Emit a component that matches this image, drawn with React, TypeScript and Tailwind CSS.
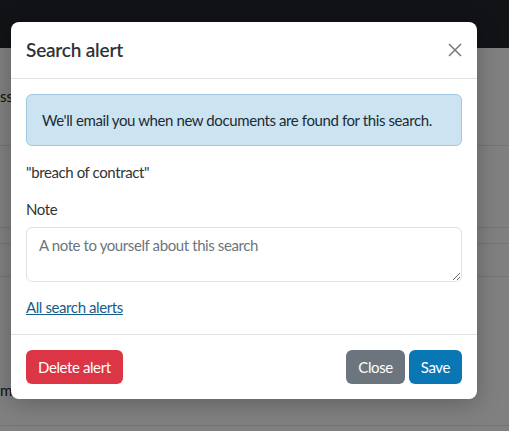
const font = { fontFamily: '"Segoe UI", Lato, sans-serif' };

const CloseIcon = () => (
  <svg width="14" height="14" viewBox="0 0 14 14" fill="none" stroke="currentColor" strokeWidth="1.5">
    <path d="M1 1L13 13M13 1L1 13" />
  </svg>
);

const SearchAlertModal = () => {
  return (
    <div className="absolute inset-0 pl-[11px] pt-[22px]">
      <div className="w-[466px] rounded-lg bg-white tracking-[-0.4px] shadow-[0_4px_24px_rgba(0,0,0,0.25)]">
        <div className="flex items-center justify-between border-b border-[#dee2e6] px-[15px] py-[13px]">
          <h5 className="text-[19px] leading-[30px] font-semibold tracking-[-0.2px] text-[#2f3337]">Search alert</h5>
          <button className="text-[#777]">
            <CloseIcon />
          </button>
        </div>

        <div className="p-[15px]">
          <div className="rounded-md border border-[#9ec8e0] bg-[#cce4f1] px-[15px] py-[14px] text-[15px] leading-[22px] text-[#1c2b36]">
            We'll email you when new documents are found for this search.
          </div>
          <p className="mt-[15px] text-[15px] leading-[22px] text-[#333]">"breach of contract"</p>
          <label className="mt-[15px] mb-[7px] block text-[15px] leading-[22px] text-[#333]">Note</label>
          <textarea
            className="block h-[55px] w-full resize-y rounded-md border border-[#dee2e6] px-3 py-1.5 text-[15px] leading-[22px] text-[#333] placeholder:text-[#6c757d] outline-none"
            placeholder="A note to yourself about this search"
          />
          <a href="#" className="mt-[14px] inline-block text-[15px] leading-[22px] text-[#155d8a] underline">
            All search alerts
          </a>
        </div>

        <div className="flex items-center justify-between border-t border-[#dee2e6] p-[15px]">
          <button className="h-[34px] rounded-md bg-[#dc3545] px-3 text-[15px] text-white">Delete alert</button>
          <div className="flex gap-1">
            <button className="h-[34px] rounded-md bg-[#6c757d] px-3 text-[15px] text-white">Close</button>
            <button className="h-[34px] rounded-md bg-[#0a77b5] px-3 text-[15px] text-white">Save</button>
          </div>
        </div>
      </div>
    </div>
  );
};

export default function App() {
  return (
    <div className="relative h-[431px] w-[509px] overflow-hidden bg-[#808080]" style={font}>
      <div className="h-12 bg-[#121316]" />
      <div className="flex h-[98px] items-center border-b border-[#747474] text-[15px] text-[#111]">ss</div>
      <div className="h-[82px] border-b border-[#747474]" />
      <div className="h-[16px] border-b border-[#747474]" />
      <div className="h-[33px] border-b border-[#747474]" />
      <div className="flex h-[149px] items-end border-b border-[#747474] pb-[24px] text-[15px] text-[#111]">m</div>
      <SearchAlertModal />
    </div>
  );
}
